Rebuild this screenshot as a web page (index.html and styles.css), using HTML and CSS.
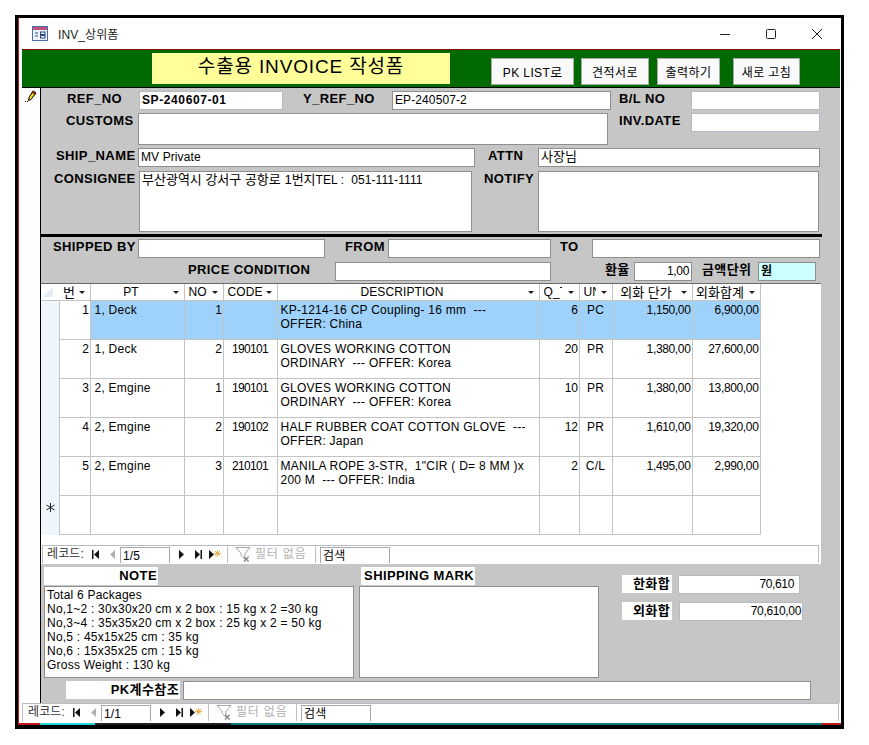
FILE: index.html
```html
<!DOCTYPE html>
<html lang="ko">

<head>
  <meta charset="UTF-8">
  <title>INV_상위폼</title>
  <link rel="stylesheet" href="styles.css">
</head>

<body>
  <svg class="sprites" width="0" height="0">
    <symbol id="first" viewBox="0 0 7 9"><path d="M0 0h1.500v9H0zM7 0v9L2 4.500z"/></symbol>
    <symbol id="prev" viewBox="0 0 5 9"><path d="M5 0v9L0 4.500z"/></symbol>
    <symbol id="next" viewBox="0 0 5 9"><path d="M0 0v9l5-4.500z"/></symbol>
    <symbol id="last" viewBox="0 0 7 9"><path d="M5.500 0H7v9H5.500zM0 0v9l5-4.500z"/></symbol>
    <symbol id="sun" viewBox="0 0 7 7">
      <path d="M3.500 0v7M0 3.500h7M1 1l5 5M6 1L1 6" stroke="#f0b050" fill="none"/>
    </symbol>
    <symbol id="filter" viewBox="0 0 16 16">
      <path d="M.5 .5h15L10 7v6L6 9V7z" fill="#fff" stroke="#a0a0a0"/>
      <path d="M9 10.500l5 5M14 10.500l-5 5" fill="none" stroke="#8a8a8a" stroke-width="1.500"/>
    </symbol>
  </svg>

  <div class="window">
    <div class="titlebar">
      <svg class="app-icon" width="16" height="15" viewBox="0 0 16 15">
        <rect x=".5" y=".5" width="15" height="14" fill="#eef3fb" stroke="#4a6ea8"/>
        <rect x="1" y="1" width="14" height="3" fill="#c0507a"/>
        <path d="M3 7h3M3 10h3" stroke="#2a4a80" fill="none"/>
        <rect x="8.500" y="6" width="4.500" height="2.500" fill="none" stroke="#2a4a80"/>
        <rect x="8.500" y="9.500" width="4.500" height="2.500" fill="none" stroke="#2a4a80"/>
      </svg>
      <span class="title">INV_상위폼</span>
      <div class="win-buttons">
        <svg width="12" height="12" viewBox="0 0 12 12"><path d="M1 6.500h10" stroke="#222"/></svg>
        <svg width="12" height="12" viewBox="0 0 12 12"><rect x="1.500" y="1.500" width="9" height="9" rx="1" fill="none" stroke="#222"/></svg>
        <svg width="12" height="12" viewBox="0 0 12 12"><path d="M1 1l10 10M11 1L1 11" stroke="#222"/></svg>
      </div>
    </div>

    <div class="header">
      <div class="banner">수출용 INVOICE 작성폼</div>
      <button class="btn btn-pk">PK LIST<span class="ko">로</span></button>
      <button class="btn btn-quote ko">견적서로</button>
      <button class="btn btn-print ko">출력하기</button>
      <button class="btn btn-refresh ko">새로 고침</button>
    </div>

    <div class="detail">
      <div class="selector">
        <svg class="pencil" width="12" height="12" viewBox="0 0 12 12">
          <path d="M8 1l3 2-5 6.500-2.500 1 .5-3z" fill="#f2d21c" stroke="#000"/>
          <path d="M8 1l3 2-1 1.500-3-2z" fill="#d84020" stroke="#000" stroke-width=".6"/>
          <path d="M0 11.500h1M2 11.500h1" stroke="#000"/>
        </svg>
      </div>

      <div class="form">
        <div class="row row-1">
          <div class="label lb-ref">REF_NO</div>
          <div class="field light strong">SP-240607-01</div>
          <div class="label lb-yref">Y_REF_NO</div>
          <div class="field">EP-240507-2</div>
          <div class="label lb-side">B/L NO</div>
          <div class="field light"></div>
        </div>
        <div class="row row-2">
          <div class="label lb-customs">CUSTOMS</div>
          <div class="field customs"></div>
          <div class="label lb-date">INV.DATE</div>
          <div class="field light"></div>
        </div>
        <div class="row row-3">
          <div class="label lb-ship">SHIP_NAME</div>
          <div class="field">MV Private</div>
          <div class="label lb-attn">ATTN</div>
          <div class="field ko">사장님</div>
        </div>
        <div class="row row-4">
          <div class="label lb-consignee">CONSIGNEE</div>
          <div class="field tall"><span class="ko">부산광역시 강서구 공항로 1번지</span>TEL :  051-111-1111</div>
          <div class="label lb-notify">NOTIFY</div>
          <div class="field tall"></div>
        </div>

        <div class="rule"></div>

        <div class="row row-5">
          <div class="label lb-shipped">SHIPPED BY</div>
          <div class="field"></div>
          <div class="label lb-from">FROM</div>
          <div class="field"></div>
          <div class="label lb-to">TO</div>
          <div class="field"></div>
        </div>
        <div class="row row-6">
          <div class="label lb-price">PRICE CONDITION</div>
          <div class="field"></div>
          <div class="label lb-rate">환율</div>
          <div class="field num">1,00</div>
          <div class="label lb-unit">금액단위</div>
          <div class="field currency">원</div>
        </div>

        <div class="subform">
          <table class="grid">
            <colgroup>
              <col class="c-sel"><col class="c-no"><col class="c-pt"><col class="c-seq"><col class="c-code">
              <col class="c-desc"><col class="c-qty"><col class="c-un"><col class="c-price"><col class="c-total">
            </colgroup>
            <thead>
              <tr>
                <th class="corner"><svg width="14" height="12" viewBox="0 0 14 12"><path d="M1 11L12 1v10z" fill="#e4edf5"/></svg></th>
                <th class="h-no ko">번<i class="sort"></i></th>
                <th class="h-mid">PT<i class="drop"></i></th>
                <th class="h-left">NO<i class="drop"></i></th>
                <th class="h-left">CODE<i class="drop"></i></th>
                <th class="h-mid">DESCRIPTION<i class="drop"></i></th>
                <th class="h-left"><span class="clip clip-qty">Q_TY</span><i class="drop"></i></th>
                <th class="h-left"><span class="clip clip-un">UNIT</span><i class="drop"></i></th>
                <th class="h-mid ko">외화 단가<i class="drop"></i></th>
                <th class="h-mid ko">외화합계<i class="drop"></i></th>
              </tr>
            </thead>
            <tbody>
              <tr class="current">
                <td class="sel"></td><td class="num no">1</td><td class="pt">1, Deck</td><td class="num">1</td><td></td>
                <td>KP-1214-16 CP Coupling- 16 mm  ---<br>OFFER: China</td>
                <td class="num">6</td><td class="mid">PC</td><td class="num">1,150,00</td><td class="num">6,900,00</td>
              </tr>
              <tr>
                <td class="sel"></td><td class="num">2</td><td class="pt">1, Deck</td><td class="num">2</td><td class="code">190101</td>
                <td>GLOVES WORKING COTTON<br>ORDINARY  --- OFFER: Korea</td>
                <td class="num">20</td><td class="mid">PR</td><td class="num">1,380,00</td><td class="num">27,600,00</td>
              </tr>
              <tr>
                <td class="sel"></td><td class="num">3</td><td class="pt">2, Emgine</td><td class="num">1</td><td class="code">190101</td>
                <td>GLOVES WORKING COTTON<br>ORDINARY  --- OFFER: Korea</td>
                <td class="num">10</td><td class="mid">PR</td><td class="num">1,380,00</td><td class="num">13,800,00</td>
              </tr>
              <tr>
                <td class="sel"></td><td class="num">4</td><td class="pt">2, Emgine</td><td class="num">2</td><td class="code">190102</td>
                <td>HALF RUBBER COAT COTTON GLOVE  ---<br>OFFER: Japan</td>
                <td class="num">12</td><td class="mid">PR</td><td class="num">1,610,00</td><td class="num">19,320,00</td>
              </tr>
              <tr>
                <td class="sel"></td><td class="num">5</td><td class="pt">2, Emgine</td><td class="num">3</td><td class="code">210101</td>
                <td>MANILA ROPE 3-STR,  1"CIR ( D= 8 MM )x<br>200 M  --- OFFER: India</td>
                <td class="num">2</td><td class="mid">C/L</td><td class="num">1,495,00</td><td class="num">2,990,00</td>
              </tr>
              <tr>
                <td class="sel"><svg class="star" width="9" height="9" viewBox="0 0 9 9"><path d="M4.500 0v9M.5 2l8 5M8.500 2l-8 5" stroke="#222" fill="none"/></svg></td>
                <td></td><td></td><td></td><td></td><td></td><td></td><td></td><td></td><td></td>
              </tr>
            </tbody>
          </table>

          <div class="nav nav-sub">
            <span class="nav-label">레코드:</span>
            <svg class="ic ic-first" width="7" height="9"><use href="#first"/></svg>
            <svg class="ic ic-prev off" width="5" height="9"><use href="#prev"/></svg>
            <span class="nav-box nav-pos">1/5</span>
            <svg class="ic ic-next" width="5" height="9"><use href="#next"/></svg>
            <svg class="ic ic-last" width="7" height="9"><use href="#last"/></svg>
            <svg class="ic ic-new" width="5" height="9"><use href="#next"/></svg>
            <svg class="ic" width="7" height="7"><use href="#sun"/></svg>
            <span class="nav-sep"></span>
            <svg class="ic-filter" width="16" height="15"><use href="#filter"/></svg>
            <span class="nav-filter">필터 없음</span>
            <span class="nav-sep sep-2"></span>
            <span class="nav-box nav-search">검색</span>
          </div>
        </div>

        <div class="lower">
          <div class="col-note">
            <div class="caption cap-note">NOTE</div>
            <div class="field memo">Total 6 Packages
No,1~2 : 30x30x20 cm x 2 box : 15 kg x 2 =30 kg
No,3~4 : 35x35x20 cm x 2 box : 25 kg x 2 = 50 kg
No,5 : 45x15x25 cm : 35 kg
No,6 : 15x35x25 cm : 15 kg
Gross Weight : 130 kg</div>
          </div>
          <div class="col-ship">
            <div class="caption cap-ship">SHIPPING MARK</div>
            <div class="field memo"></div>
          </div>
          <div class="col-sum">
            <div class="sum-row">
              <div class="caption cap-sum">한화합</div>
              <div class="field light num sum-krw">70,610</div>
            </div>
            <div class="sum-row">
              <div class="caption cap-sum">외화합</div>
              <div class="field light num sum-fx">70,610,00</div>
            </div>
          </div>
        </div>

        <div class="pk-row">
          <div class="caption cap-pk">PK계수참조</div>
          <div class="field pk-field"></div>
        </div>
      </div>
    </div>

    <div class="nav nav-main">
      <span class="nav-label">레코드:</span>
      <svg class="ic ic-first" width="7" height="9"><use href="#first"/></svg>
      <svg class="ic ic-prev off" width="5" height="9"><use href="#prev"/></svg>
      <span class="nav-box nav-pos">1/1</span>
      <svg class="ic ic-next" width="5" height="9"><use href="#next"/></svg>
      <svg class="ic ic-last" width="7" height="9"><use href="#last"/></svg>
      <svg class="ic ic-new" width="5" height="9"><use href="#next"/></svg>
      <svg class="ic" width="7" height="7"><use href="#sun"/></svg>
      <span class="nav-sep"></span>
      <svg class="ic-filter" width="16" height="15"><use href="#filter"/></svg>
      <span class="nav-filter">필터 없음</span>
      <span class="nav-sep sep-2"></span>
      <span class="nav-box nav-search">검색</span>
    </div>

    <div class="strip"></div>
  </div>
</body>

</html>
```

FILE: styles.css
```css
* {
  box-sizing: border-box;
  margin: 0;
  padding: 0;
}

body {
  background: #fff;
  color: #000;
  font-family: "Liberation Sans", "Noto Sans CJK KR", sans-serif;
  font-size: 12px;
  letter-spacing: 0.1px;
}

.sprites {
  display: block;
}

.ko {
  font-size: 13px;
  letter-spacing: 0;
}

.window {
  width: 829px;
  height: 714px;
  margin: 15px 0 0 15px;
  border: 3px solid #000;
  border-bottom-width: 4px;
  background: #fff;
  display: flex;
  flex-direction: column;
  box-shadow: inset 1px 0 0 #d01818;
}

/* title bar */
.titlebar {
  height: 31px;
  display: flex;
  align-items: center;
  padding-left: 14px;
  flex: none;
}

.title {
  margin-left: 10px;
  color: #222;
}

.win-buttons {
  margin-left: auto;
  margin-right: 18px;
  display: flex;
  gap: 34px;
}

/* green header */
.header {
  height: 39px;
  margin-left: 4px;
  margin-right: 1px;
  background: #006a00;
  border-top: 1px solid #8a0c0c;
  border-bottom: 1px solid #000;
  display: flex;
  align-items: flex-start;
  flex: none;
  padding: 3px 0 0 130px;
}

.banner {
  width: 298px;
  height: 31px;
  background: #ffff99;
  font-size: 19px;
  letter-spacing: 0.85px;
  line-height: 28px;
  text-align: center;
}

.btn {
  height: 27px;
  margin-top: 5px;
  background: #f9f9f9;
  border: 1px solid #a8a8a8;
  font-family: inherit;
  font-size: 12px;
  letter-spacing: 0.4px;
}

.btn-pk { width: 83px; margin-left: 41px; }
.btn-quote { width: 68px; margin-left: 7px; }
.btn-print { width: 63px; margin-left: 8px; }
.btn-refresh { width: 67px; margin-left: 13px; }

/* detail area */
.detail {
  flex: none;
  height: 615px;
  display: flex;
  margin-right: 1px;
}

.selector {
  width: 23px;
  flex: none;
  border-right: 1px solid #000;
  padding: 2px 0 0 7px;
}

.pencil {
  display: block;
}

.form {
  flex: 1;
  background: #c6c6c6;
  padding-top: 3px;
}

.row {
  display: grid;
  align-items: start;
}

.row-1 { grid-template-columns: 98px 144px 109px 219px 80px 129px; }
.row-2 { grid-template-columns: 97px 470px 83px 129px; margin-top: 3px; }
.row-3 { grid-template-columns: 97px 337px 63px 282px; margin-top: 3px; }
.row-4 { grid-template-columns: 98px 333px 66px 281px; margin-top: 4px; }
.row-5 { grid-template-columns: 97px 187px 63px 163px 41px 228px; margin-top: 2px; }
.row-6 { grid-template-columns: 294px 216px 83px 58px 66px 58px; margin-top: 4px; }

.label {
  font-size: 13px;
  font-weight: bold;
  line-height: 15px;
  letter-spacing: 0.4px;
  white-space: nowrap;
}

.lb-ref { padding-left: 26px; }
.lb-yref { padding-left: 20px; }
.lb-side { padding-left: 8px; }
.lb-date { padding-left: 11px; }
.lb-customs { padding-left: 25px; }
.lb-ship { padding-left: 15px; }
.lb-attn { padding-left: 13px; }
.lb-consignee { padding-left: 13px; }
.lb-notify { padding-left: 12px; }
.lb-shipped { padding-left: 12px; }
.lb-from { padding-left: 20px; }
.lb-to { padding-left: 9px; }
.lb-price { padding-left: 147px; }
.lb-rate { padding-left: 54px; }
.lb-unit { padding-left: 10px; }

.field {
  height: 19px;
  background: #fff;
  border: 1px solid #8f8f8f;
  padding: 0 2px;
  line-height: 16px;
  white-space: pre-wrap;
  overflow: hidden;
}

.light { border-color: #b4bac2; }
.strong { font-weight: bold; letter-spacing: 0.6px; }
.customs { height: 32px; }
.tall { height: 61px; }
.num { text-align: right; letter-spacing: -0.35px; }
.currency { background: #ccffff; font-weight: bold; }

.rule {
  height: 3px;
  margin: 2px 18px 0 0;
  background: #000;
}

/* subform with the datasheet */
.subform {
  width: 780px;
  height: 281px;
  margin-top: 2px;
  background: #fff;
  border-top: 1px solid #6a6a6a;
}

.grid {
  table-layout: fixed;
  width: 719px;
  border-collapse: collapse;
}

.c-sel { width: 18px; }
.c-no { width: 31px; }
.c-pt { width: 94px; }
.c-seq { width: 39px; }
.c-code { width: 54px; }
.c-desc { width: 262px; }
.c-qty { width: 40px; }
.c-un { width: 33px; }
.c-price { width: 80px; }
.c-total { width: 68px; }

.grid th {
  height: 16px;
  padding-top: 1px;
  font-weight: normal;
  position: relative;
  border-right: 1px solid #c4c4c4;
  border-bottom: 1px solid #c4c4c4;
  white-space: nowrap;
  overflow: hidden;
  line-height: 15px;
}

.grid th.corner {
  border-right: 0;
  padding-top: 0;
  text-align: left;
}

.corner svg {
  display: block;
}

.h-mid { text-align: center; padding-right: 12px; }
.h-left { text-align: left; padding-left: 4px; }
.h-no { text-align: left; padding-left: 4px; }

.clip {
  display: inline-block;
  overflow: hidden;
  vertical-align: top;
}

.clip-qty { width: 18px; }
.clip-un { width: 12px; }

.drop,
.sort {
  position: absolute;
  right: 5px;
  top: 7px;
  border-left: 3px solid transparent;
  border-right: 3px solid transparent;
  border-top: 3px solid #222;
}

.grid td {
  height: 39px;
  padding: 2px 3px 0 3px;
  line-height: 14px;
  vertical-align: top;
  border-right: 1px solid #c4c4c4;
  border-bottom: 1px solid #c4c4c4;
  white-space: pre-wrap;
  letter-spacing: 0.25px;
}

.grid td.pt {
  padding-left: 4px;
}

.grid td.num {
  text-align: right;
  padding-right: 1px;
  letter-spacing: -0.35px;
}

.grid td.mid {
  text-align: center;
}

.grid td.code {
  text-align: center;
  letter-spacing: -0.7px;
}

.grid td.sel {
  background: #eef6fc;
  border-bottom: 0;
  padding: 0;
}

.star {
  display: block;
  margin: 7px 0 0 5px;
}

.current td {
  background: #9ed2fb;
}

.grid .current td.no {
  background: #fff;
}

/* record navigation */
.nav {
  height: 18px;
  background: #fff;
  display: flex;
  align-items: flex-start;
  border-top: 1px solid #b8bcc4;
  border-right: 1px solid #b8bcc4;
  border-left: 1px solid #b8bcc4;
  line-height: 17px;
  overflow: hidden;
}

.nav-sub {
  width: 777px;
  margin: 10px 0 0 1px;
  padding-left: 4px;
}

.nav-main {
  flex: none;
  width: 817px;
  margin-left: 4px;
  padding-left: 5px;
}

.nav-label {
  width: 45px;
  flex: none;
  color: #333;
}

.ic {
  flex: none;
  margin-top: 4px;
  fill: #111;
}

.off { fill: #b0b0b0; }
.ic-prev { margin-left: 11px; }
.ic-next { margin-left: 9px; }
.ic-last { margin-left: 11px; }
.ic-new { margin-left: 7px; }

.nav-box {
  border: 1px solid #a8a8a8;
  border-bottom: 0;
  height: 18px;
  padding-left: 2px;
  flex: none;
  margin-top: 1px;
}

.nav-pos {
  width: 50px;
  margin-left: 5px;
}

.nav-sep {
  width: 1px;
  height: 17px;
  flex: none;
  background: #c0c0c0;
  margin-left: 6px;
}

.sep-2 {
  margin-left: 5px;
}

.ic-filter {
  flex: none;
  margin: 1px 0 0 7px;
}

.nav-filter {
  width: 55px;
  flex: none;
  margin-left: 4px;
  color: #b0b0b0;
  letter-spacing: 0.8px;
}

.nav-search {
  width: 70px;
  margin-left: 4px;
}

/* lower part of the form */
.lower {
  display: flex;
  align-items: flex-start;
  padding: 3px 0 0 3px;
}

.caption {
  height: 18px;
  background: #fff;
  font-size: 13px;
  font-weight: bold;
  letter-spacing: 0.4px;
  line-height: 17px;
  text-align: right;
  white-space: nowrap;
}

.col-note {
  width: 310px;
  margin-right: 5px;
}

.col-ship {
  width: 240px;
  margin-right: 23px;
}

.cap-note {
  width: 114px;
  padding-right: 1px;
  margin-bottom: 1px;
}

.cap-ship {
  width: 114px;
  padding-right: 1px;
  margin: 0 0 1px 2px;
}

.memo {
  height: 92px;
  line-height: 14px;
  padding-top: 1px;
  letter-spacing: 0.22px;
}

.col-sum {
  padding-top: 8px;
}

.sum-row {
  display: flex;
  margin-bottom: 8px;
}

.cap-sum {
  width: 50px;
  padding-right: 2px;
}

.sum-krw {
  width: 122px;
  margin-left: 6px;
  padding-right: 5px;
}

.sum-fx {
  width: 124px;
  margin-left: 7px;
  padding-right: 1px;
}

.pk-row {
  display: flex;
  margin: 3px 0 0 25px;
}

.cap-pk {
  width: 114px;
  padding-right: 1px;
}

.pk-field {
  width: 628px;
  height: 19px;
  margin-left: 3px;
}

/* leftover pixels of the window behind the form */
.strip {
  flex: 1;
  margin-left: 1px;
  background:
    linear-gradient(#fff 0 2px, transparent 2px),
    linear-gradient(90deg, #c01818 0 21px, #20d8d8 21px 76px, #222 76px 212px, #0a7a7a 212px 803px, #c01818 803px);
}
```
